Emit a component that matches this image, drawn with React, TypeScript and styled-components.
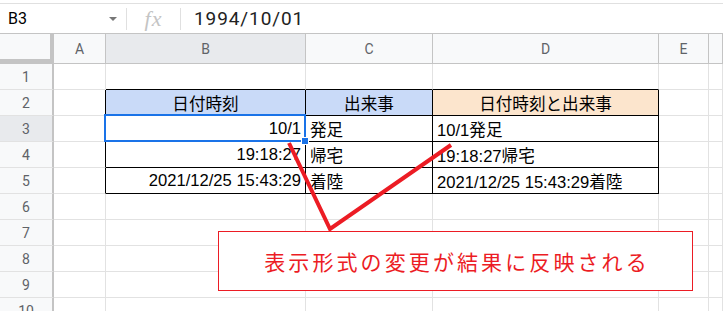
import React from "react";
import styled, { createGlobalStyle } from "styled-components";

const GlobalStyle = createGlobalStyle`
  html, body {
    margin: 0;
    padding: 0;
    background: #fff;
    overflow: hidden;
  }
  * { box-sizing: border-box; }
`;

const UI_FONT = `Roboto, "Liberation Sans", Arial, sans-serif`;
const CELL_FONT = `"Liberation Sans", Arial, "Noto Sans CJK JP", sans-serif`;
const RED = "#ec1c24";

const Page = styled.div`
  position: relative;
  width: 723px;
  height: 311px;
  padding-top: 3px;
  overflow: hidden;
  font-family: ${UI_FONT};
`;

const FormulaBar = styled.div`
  height: 30px;
  display: flex;
  align-items: center;
  border-top: 1px solid #e0e0e0;
  color: #000;
`;

const NameBox = styled.div`
  width: 126px;
  display: flex;
  align-items: center;
  justify-content: space-between;
  padding: 0 8px 0 8px;
  font-size: 16px;
`;

const Caret = styled.span`
  width: 0;
  height: 0;
  margin-right: 1px;
  border-left: 4px solid transparent;
  border-right: 4px solid transparent;
  border-top: 4px solid #777;
`;

const Divider = styled.div`
  width: 1px;
  height: 22px;
  background: #e0e0e0;
`;

const Fx = styled.div`
  width: 53px;
  text-align: center;
  font-family: "Liberation Serif", "DejaVu Serif", serif;
  font-style: italic;
  font-size: 22px;
  color: #c4c4c4;
  letter-spacing: 1px;
`;

const FormulaText = styled.div`
  padding-left: 13px;
  font-size: 19px;
  letter-spacing: 0.9px;
  color: #222;
`;

const Grid = styled.div`
  display: grid;
  grid-template-columns: 54px 52px 200px 127px 226px 50px 1fr;
  grid-template-rows: 30px repeat(10, 26px);
  border-top: 1px solid #c4c4c4;
`;

const Corner = styled.div`
  background: #f8f9fa;
  border-right: 4px solid #c4c4c4;
  border-bottom: 5px solid #c4c4c4;
`;

const ColHead = styled.div<{ $sel?: boolean }>`
  display: flex;
  align-items: center;
  justify-content: center;
  background: ${(p) => (p.$sel ? "#e8eaed" : "#f8f9fa")};
  border-right: 1px solid #c4c4c4;
  border-bottom: 1px solid #c4c4c4;
  color: #5f6368;
  font-size: 14px;
  padding-top: 1px;
`;

const RowHead = styled.div<{ $sel?: boolean }>`
  display: flex;
  align-items: center;
  justify-content: center;
  background: ${(p) => (p.$sel ? "#e8eaed" : "#f8f9fa")};
  border-right: 2px solid #c4c4c4;
  border-bottom: 1px solid #e2e2e2;
  color: #5f6368;
  font-size: 14px;
`;

const Cell = styled.div<{
  $align?: "left" | "center" | "right";
  $bg?: string;
  $right?: boolean;
  $bottom?: boolean;
}>`
  position: relative;
  display: flex;
  align-items: center;
  justify-content: ${(p) =>
    p.$align === "right" ? "flex-end" : p.$align === "center" ? "center" : "flex-start"};
  padding: 1px 4px 0 4px;
  background: ${(p) => p.$bg || "#fff"};
  border-right: 1px solid ${(p) => (p.$right ? "#000" : "#e2e2e2")};
  border-bottom: 1px solid ${(p) => (p.$bottom ? "#000" : "#e2e2e2")};
  font-family: ${CELL_FONT};
  font-size: 16.6px;
  color: #000;
  white-space: nowrap;
`;

const Selection = styled.div`
  position: absolute;
  z-index: 2;
  left: -2px;
  top: -2px;
  right: -1px;
  bottom: -1px;
  border: 2px solid #1a73e8;
  pointer-events: none;
`;

const Handle = styled.div`
  position: absolute;
  right: -5px;
  bottom: -5px;
  width: 8px;
  height: 8px;
  background: #1a73e8;
  border: 1px solid #fff;
`;

const Overlay = styled.svg`
  position: absolute;
  z-index: 3;
  left: 0;
  top: 0;
  pointer-events: none;
`;

const Callout = styled.div`
  position: absolute;
  z-index: 3;
  left: 218px;
  top: 231px;
  width: 475px;
  height: 60px;
  display: flex;
  align-items: center;
  justify-content: center;
  background: #fff;
  border: 1px solid ${RED};
  color: ${RED};
  font-family: "Noto Sans CJK JP", sans-serif;
  font-size: 21px;
  letter-spacing: 3.1px;
  padding-left: 3px;
`;

const cols = ["A", "B", "C", "D", "E", ""];

const HEAD_BLUE = "#c9daf8";
const HEAD_ORANGE = "#fce5cd";

const rows: string[][] = [
  ["", "", "", "", "", ""],
  ["", "日付時刻", "出来事", "日付時刻と出来事", "", ""],
  ["", "10/1", "発足", "10/1発足", "", ""],
  ["", "19:18:27", "帰宅", "19:18:27帰宅", "", ""],
  ["", "2021/12/25 15:43:29", "着陸", "2021/12/25 15:43:29着陸", "", ""],
  ["", "", "", "", "", ""],
  ["", "", "", "", "", ""],
  ["", "", "", "", "", ""],
  ["", "", "", "", "", ""],
  ["", "", "", "", "", ""],
];

export default function App() {
  return (
    <>
      <GlobalStyle />
      <Page>
        <FormulaBar>
          <NameBox>
            B3
            <Caret />
          </NameBox>
          <Divider />
          <Fx>fx</Fx>
          <Divider />
          <FormulaText>1994/10/01</FormulaText>
        </FormulaBar>
        <Grid>
          <Corner />
          {cols.map((c, i) => (
            <ColHead key={i} $sel={c === "B"}>
              {c}
            </ColHead>
          ))}
          {rows.map((r, ri) => {
            const rowNo = ri + 1;
            return (
              <React.Fragment key={ri}>
                <RowHead $sel={rowNo === 3}>{rowNo}</RowHead>
                {r.map((v, ci) => {
                  const inBox = rowNo >= 2 && rowNo <= 5 && ci >= 1 && ci <= 3;
                  const right = rowNo >= 2 && rowNo <= 5 && ci >= 0 && ci <= 3;
                  const bottom = rowNo >= 1 && rowNo <= 5 && ci >= 1 && ci <= 3;
                  const isHead = rowNo === 2 && inBox;
                  const bg = isHead ? (ci === 3 ? HEAD_ORANGE : HEAD_BLUE) : undefined;
                  const align = isHead ? "center" : ci === 1 ? "right" : "left";
                  return (
                    <Cell key={ci} $align={align} $bg={bg} $right={right} $bottom={bottom}>
                      {v}
                      {rowNo === 3 && ci === 1 && (
                        <Selection>
                          <Handle />
                        </Selection>
                      )}
                    </Cell>
                  );
                })}
              </React.Fragment>
            );
          })}
        </Grid>
        <Overlay width="723" height="311" viewBox="0 0 723 311">
          <polyline
            points="289,143 330,229 451,145"
            fill="none"
            stroke={RED}
            strokeWidth="4"
            strokeLinejoin="miter"
          />
        </Overlay>
        <Callout>表示形式の変更が結果に反映される</Callout>
      </Page>
    </>
  );
}
